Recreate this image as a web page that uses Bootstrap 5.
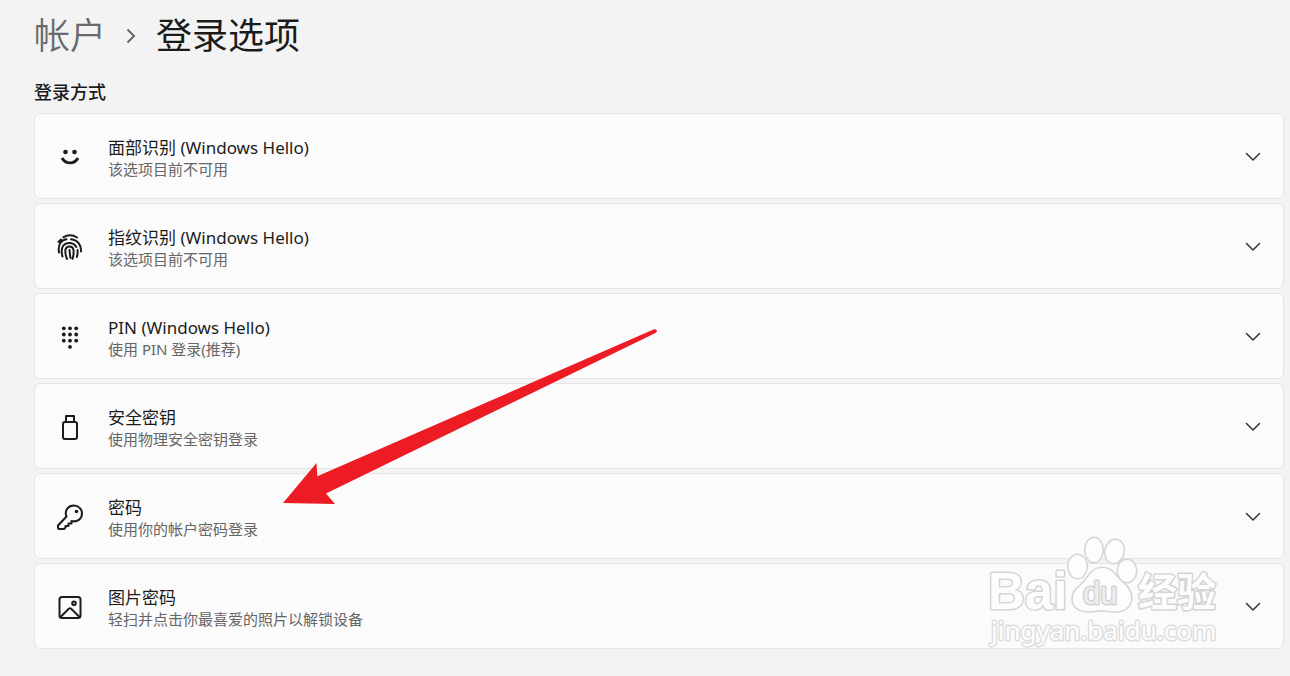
<!DOCTYPE html>
<html lang="zh-CN">
<head>
<meta charset="utf-8">
<meta name="viewport" content="width=device-width, initial-scale=1">
<title>登录选项</title>
<link href="https://cdn.jsdelivr.net/npm/bootstrap@5.3.0/dist/css/bootstrap.min.css" rel="stylesheet">
<style>
  body { background: #f3f3f3; color: #1b1b1b; font-family: "Noto Sans", "Noto Sans CJK SC", sans-serif; }
  .page { padding: 8px 6px 27px 34px; }
  .crumbs { font-size: 36px; line-height: 56px; gap: 20px; }
  .crumbs a { color: #6a6a6a; font-weight: 350; }
  .crumbs h1 { font-size: 36px; line-height: 56px; font-weight: 400; }
  .section-title { font-size: 18px; line-height: 24px; font-weight: 500; margin: 16px 0 9px; }
  .options { gap: 4px; }
  .option { background: #fbfbfb; border: 1px solid #e5e5e5; border-radius: 6px; min-height: 86px; padding: 10px 22px 8px; gap: 25px; color: #1b1b1b; }
  .option:hover { background: #f6f6f6; }
  .option svg { flex: none; fill: none; stroke: #1b1b1b; stroke-width: 2; stroke-linecap: round; stroke-linejoin: round; }
  .option .dots { fill: #1b1b1b; stroke: none; }
  .option .chevron { stroke-width: 1.5; stroke: #333; }
  .option-text { padding-top: 2px; }
  .option-name { font-size: 17px; line-height: 22px; }
  .option-note { font-size: 15px; line-height: 20px; color: #666; }
  .pointer { left: 280px; top: 325px; pointer-events: none; }
  .watermark { right: 65px; top: 533px; pointer-events: none; }
  .watermark text, .watermark path, .watermark ellipse { fill: #fdfdfd; stroke: #d4d4d4; stroke-width: 3; paint-order: stroke; stroke-linejoin: round; }
  .watermark .brand { font: bold 51px "Liberation Sans", sans-serif; }
  .watermark .paw-text { font: 31px "Liberation Sans", sans-serif; fill: #eee; }
  .watermark .brand-cn { font: bold 39px "Noto Sans CJK SC", sans-serif; }
  .watermark .site { font: 26px "Noto Sans", sans-serif; stroke: #dedede; }
</style>
</head>
<body>
<main class="page container-fluid position-relative">
  <nav class="crumbs d-flex align-items-center" aria-label="breadcrumb">
    <a href="#" class="text-decoration-none">帐户</a>
    <svg width="10" height="16" viewBox="0 0 10 16" fill="none" stroke="#666" stroke-width="2" aria-hidden="true"><path d="M1.500 1.500 8 8 1.500 14.500"/></svg>
    <h1 class="mb-0">登录选项</h1>
  </nav>
  <h2 class="section-title">登录方式</h2>

  <div class="options d-flex flex-column">
    <button type="button" class="option d-flex align-items-center w-100 text-start">
      <svg width="26" height="26" viewBox="0 0 26 26"><g class="dots"><circle cx="8.500" cy="8" r="2.300"/><circle cx="17.500" cy="8" r="2.300"/></g><path stroke-width="2.800" stroke-linecap="butt" d="M5 14C8.500 20.500 17.500 20.500 21 14"/></svg>
      <span class="option-text flex-grow-1"><span class="option-name d-block">面部识别 (Windows Hello)</span><span class="option-note d-block">该选项目前不可用</span></span>
      <svg class="chevron" width="16" height="16" viewBox="0 0 16 16"><path d="m1.500 4.500 6.500 6.500 6.500-6.500"/></svg>
    </button>
    <button type="button" class="option d-flex align-items-center w-100 text-start">
      <svg width="26" height="26" viewBox="0 0 26 26"><path d="M1.500 8 4 5.500M6.500 3.200C11 .7 16 1 20 3.500M2 18.500C.5 10 5 5.500 9.500 5.200M14 5.200C21 6 24.500 11.500 24 17.500M5.500 22.500C3.500 15.500 5 9 12.500 9c3.500 0 5.500 1.700 6.800 4M20.500 16c.4 3 0 5-.7 7M10 25c-1-3-2.300-6-1.500-9.500 1-4.200 7.500-4 8 .5.300 3.300 0 6-1 8.800M12.500 16c.4 3 .4 5.500 1 8"/></svg>
      <span class="option-text flex-grow-1"><span class="option-name d-block">指纹识别 (Windows Hello)</span><span class="option-note d-block">该选项目前不可用</span></span>
      <svg class="chevron" width="16" height="16" viewBox="0 0 16 16"><path d="m1.500 4.500 6.500 6.500 6.500-6.500"/></svg>
    </button>
    <button type="button" class="option d-flex align-items-center w-100 text-start">
      <svg width="26" height="26" viewBox="0 0 26 26"><g class="dots"><circle cx="6.800" cy="4.300" r="1.900"/><circle cx="13" cy="4.300" r="1.900"/><circle cx="19.200" cy="4.300" r="1.900"/><circle cx="6.800" cy="10.500" r="1.900"/><circle cx="13" cy="10.500" r="1.900"/><circle cx="19.200" cy="10.500" r="1.900"/><circle cx="6.800" cy="16.700" r="1.900"/><circle cx="13" cy="16.700" r="1.900"/><circle cx="19.200" cy="16.700" r="1.900"/><circle cx="13" cy="22.900" r="1.900"/></g></svg>
      <span class="option-text flex-grow-1"><span class="option-name d-block">PIN (Windows Hello)</span><span class="option-note d-block">使用 PIN 登录(推荐)</span></span>
      <svg class="chevron" width="16" height="16" viewBox="0 0 16 16"><path d="m1.500 4.500 6.500 6.500 6.500-6.500"/></svg>
    </button>
    <button type="button" class="option d-flex align-items-center w-100 text-start">
      <svg width="26" height="26" viewBox="0 0 26 26"><path d="M9 8V2h8v6"/><rect x="6" y="8" width="14" height="17" rx="2"/></svg>
      <span class="option-text flex-grow-1"><span class="option-name d-block">安全密钥</span><span class="option-note d-block">使用物理安全密钥登录</span></span>
      <svg class="chevron" width="16" height="16" viewBox="0 0 16 16"><path d="m1.500 4.500 6.500 6.500 6.500-6.500"/></svg>
    </button>
    <button type="button" class="option d-flex align-items-center w-100 text-start">
      <svg width="26" height="26" viewBox="0 0 26 26"><path d="M9.500 12.500C7 6 11.500 1.500 17 1.500a8 8 0 0 1 8 8c0 5.500-5 9-10.500 7.500v2.500H11.500V22H8.500v1.500L7 25H2.500C1.500 25 1 24.500 1 23.500V21.500Z"/><circle class="dots" cx="19.500" cy="7.500" r="1.800"/></svg>
      <span class="option-text flex-grow-1"><span class="option-name d-block">密码</span><span class="option-note d-block">使用你的帐户密码登录</span></span>
      <svg class="chevron" width="16" height="16" viewBox="0 0 16 16"><path d="m1.500 4.500 6.500 6.500 6.500-6.500"/></svg>
    </button>
    <button type="button" class="option d-flex align-items-center w-100 text-start">
      <svg width="26" height="26" viewBox="0 0 26 26"><rect x="2.500" y="3" width="21" height="21" rx="2.500"/><path d="m3.500 23 8.300-8.300q1.200-1 2.400 0l8.300 8.300"/><circle cx="17" cy="9.300" r="1.800"/></svg>
      <span class="option-text flex-grow-1"><span class="option-name d-block">图片密码</span><span class="option-note d-block">轻扫并点击你最喜爱的照片以解锁设备</span></span>
      <svg class="chevron" width="16" height="16" viewBox="0 0 16 16"><path d="m1.500 4.500 6.500 6.500 6.500-6.500"/></svg>
    </button>
  </div>

  <svg class="pointer position-absolute" width="380" height="182" viewBox="0 0 380 182" aria-hidden="true"><path fill="#ed1c24" d="M3 178 36.500 138 37.300 151.300 374 4.300Q377 4 377 6.500L375.500 8 46 168.500 55 179Z"/></svg>

  <svg class="watermark position-absolute" width="240" height="118" viewBox="0 0 240 118">
    <text class="brand" x="3" y="76">Bai</text>
    <ellipse cx="92.500" cy="33.500" rx="9" ry="11.500"/>
    <ellipse cx="109" cy="17" rx="8.500" ry="12"/>
    <ellipse cx="129.500" cy="18.500" rx="9" ry="11.500" transform="rotate(12 129.500 18.500)"/>
    <ellipse cx="142" cy="38" rx="9" ry="11"/>
    <path d="M117 35C127 35 130 43 137 49C145 56 149 64 144 72C138 81 127 78 117 77C106 78 98 80 91 74C86 69 87 60 93 55C104 46 106 35 117 35Z"/>
    <text class="paw-text" x="98" y="71">du</text>
    <text class="brand-cn" x="153" y="73">经验</text>
    <text class="site" x="6" y="107">jingyan.baidu.com</text>
  </svg>
</main>
<script src="https://cdn.jsdelivr.net/npm/bootstrap@5.3.0/dist/js/bootstrap.bundle.min.js"></script>
</body>
</html>
